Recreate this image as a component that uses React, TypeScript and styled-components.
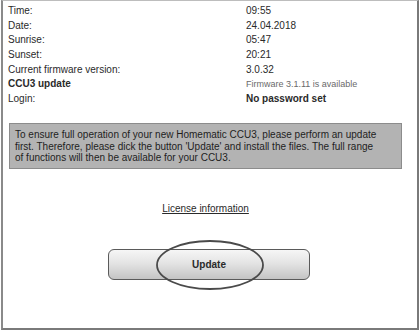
import React from 'react';
import styled, { createGlobalStyle } from 'styled-components';

const GlobalStyle = createGlobalStyle`
  html, body {
    margin: 0;
    padding: 0;
    background: #ffffff;
  }
  body {
    font-family: "Liberation Sans", Arial, sans-serif;
    color: #2a2a2a;
  }
`;

const Frame = styled.div`
  box-sizing: border-box;
  width: 418px;
  height: 330px;
  margin: 0 1px;
  border-top: 1px solid #bdbdbd;
  border-left: 2px solid #8a8a8a;
  border-right: 2px solid #7a7a7a;
  border-bottom: 2px solid #7a7a7a;
  display: flex;
  flex-direction: column;
`;

const InfoGrid = styled.div`
  display: grid;
  grid-template-columns: 238px 1fr;
  grid-auto-rows: 14.7px;
  align-items: center;
  padding: 2px 0 0 5px;
  font-size: 10px;
`;

const Label = styled.div<{ strong?: boolean }>`
  color: #2a2a2a;
  font-weight: ${({ strong }) => (strong ? 600 : 400)};
  white-space: nowrap;
`;

const Value = styled.div<{ muted?: boolean; strong?: boolean }>`
  color: ${({ muted }) => (muted ? '#6a6a6a' : '#2a2a2a')};
  font-size: ${({ muted }) => (muted ? '9px' : '10px')};
  font-weight: ${({ strong }) => (strong ? 600 : 400)};
  white-space: nowrap;
`;

const Notice = styled.div`
  margin: 17px 15px 0 6px;
  padding: 5px 6px 4px 5px;
  background: #b3b3b3;
  border: 1px solid #8c8c8c;
  font-size: 10px;
  line-height: 11.7px;
  color: #1e1e1e;
  white-space: nowrap;
`;

const LicenseLink = styled.a`
  align-self: center;
  margin-top: 34px;
  margin-right: 9px;
  font-size: 10px;
  color: #2a2a2a;
  text-decoration: underline;
`;

const ButtonArea = styled.div`
  position: relative;
  align-self: flex-start;
  margin: 35px 0 0 105px;
`;

const UpdateButton = styled.button`
  display: flex;
  align-items: center;
  justify-content: center;
  width: 202px;
  height: 31px;
  border: 1.5px solid #5a5a5a;
  border-radius: 6px;
  background: linear-gradient(to bottom, #f6f6f6 0%, #e4e4e4 45%, #c4c4c4 100%);
  font-family: "Liberation Sans", Arial, sans-serif;
  font-size: 10px;
  font-weight: 700;
  color: #2a2a2a;
  padding: 0;
`;

const Circle = styled.svg`
  position: absolute;
  left: 47px;
  top: -10px;
  pointer-events: none;
`;

const rows: { label: string; value: string; labelStrong?: boolean; muted?: boolean; strong?: boolean }[] = [
  { label: 'Time:', value: '09:55' },
  { label: 'Date:', value: '24.04.2018' },
  { label: 'Sunrise:', value: '05:47' },
  { label: 'Sunset:', value: '20:21' },
  { label: 'Current firmware version:', value: '3.0.32' },
  { label: 'CCU3 update', value: 'Firmware 3.1.11 is available', labelStrong: true, muted: true },
  { label: 'Login:', value: 'No password set', strong: true },
];

export default function App() {
  return (
    <>
      <GlobalStyle />
      <Frame>
        <InfoGrid>
          {rows.map((row) => (
            <React.Fragment key={row.label}>
              <Label strong={row.labelStrong}>{row.label}</Label>
              <Value muted={row.muted} strong={row.strong}>{row.value}</Value>
            </React.Fragment>
          ))}
        </InfoGrid>
        <Notice>
          To ensure full operation of your new Homematic CCU3, please perform an update
          <br />
          first. Therefore, please dick the button 'Update' and install the files. The full range
          <br />
          of functions will then be available for your CCU3.
        </Notice>
        <LicenseLink>License information</LicenseLink>
        <ButtonArea>
          <UpdateButton>Update</UpdateButton>
          <Circle width="110" height="52" viewBox="0 0 110 52">
            <ellipse cx="55" cy="26" rx="53" ry="24" fill="none" stroke="#4a4a4a" strokeWidth="1.8" />
          </Circle>
        </ButtonArea>
      </Frame>
    </>
  );
}
